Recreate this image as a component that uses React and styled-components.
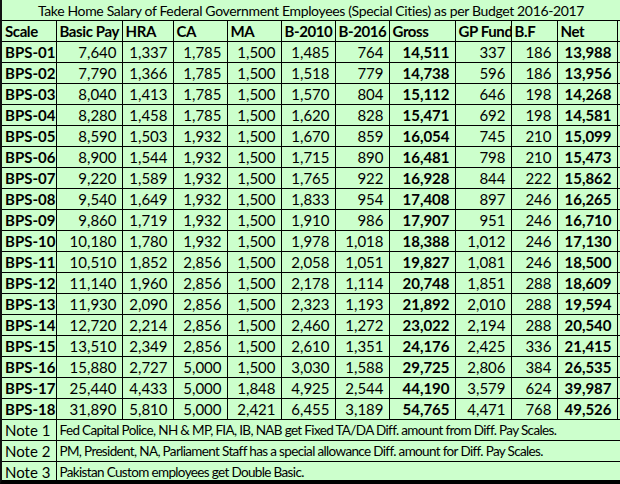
import React from "react";
import styled, { createGlobalStyle } from "styled-components";

const Global = createGlobalStyle`
  html, body { margin: 0; padding: 0; background: #ccffcc; }
  body { font-family: Lato, "Open Sans", sans-serif; color: #000; }
`;

const Sheet = styled.div`
  width: 620px;
  height: 484px;
  box-sizing: border-box;
  background: #ccffcc;
  border-left: 2px solid #111;
  border-bottom: 4px solid #000;
  overflow: hidden;
`;

const Table = styled.table`
  border-collapse: collapse;
  table-layout: fixed;
  width: 618px;
  font-size: 15px;
  line-height: 19px;
`;

const TitleCell = styled.td`
  height: 20px;
  padding: 0;
  text-align: center;
  white-space: nowrap;
  font-size: 14px;
  letter-spacing: -0.35px;
  border-bottom: 1px solid #000;
`;

const Cell = styled.td`
  height: 20px;
  padding: 0 5px 0 3px;
  border: 1px solid #000;
  border-top: none;
  white-space: nowrap;
  overflow: hidden;
  text-align: ${(p) => (p.$num ? "right" : "left")};
  font-weight: ${(p) => (p.$bold ? 700 : 400)};
  letter-spacing: ${(p) => (p.$head ? "-0.4px" : "0")};
  &:first-child { border-left: none; }
  &:last-child { border-right: none; }
`;

const Gutter = styled.td`
  padding: 0;
  border-bottom: 1px solid #000;
`;

const NoteText = styled(Cell)`
  font-size: 13.5px;
  letter-spacing: -0.65px;
`;

const widths = [54, 66, 51, 54, 54, 54, 54, 66, 56, 46, 60, 3];
const headers = ["Scale", "Basic Pay", "HRA", "CA", "MA", "B-2010", "B-2016", "Gross", "GP Fund", "B.F", "Net"];

const rows = [
  ["BPS-01", "7,640", "1,337", "1,785", "1,500", "1,485", "764", "14,511", "337", "186", "13,988"],
  ["BPS-02", "7,790", "1,366", "1,785", "1,500", "1,518", "779", "14,738", "596", "186", "13,956"],
  ["BPS-03", "8,040", "1,413", "1,785", "1,500", "1,570", "804", "15,112", "646", "198", "14,268"],
  ["BPS-04", "8,280", "1,458", "1,785", "1,500", "1,620", "828", "15,471", "692", "198", "14,581"],
  ["BPS-05", "8,590", "1,503", "1,932", "1,500", "1,670", "859", "16,054", "745", "210", "15,099"],
  ["BPS-06", "8,900", "1,544", "1,932", "1,500", "1,715", "890", "16,481", "798", "210", "15,473"],
  ["BPS-07", "9,220", "1,589", "1,932", "1,500", "1,765", "922", "16,928", "844", "222", "15,862"],
  ["BPS-08", "9,540", "1,649", "1,932", "1,500", "1,833", "954", "17,408", "897", "246", "16,265"],
  ["BPS-09", "9,860", "1,719", "1,932", "1,500", "1,910", "986", "17,907", "951", "246", "16,710"],
  ["BPS-10", "10,180", "1,780", "1,932", "1,500", "1,978", "1,018", "18,388", "1,012", "246", "17,130"],
  ["BPS-11", "10,510", "1,852", "2,856", "1,500", "2,058", "1,051", "19,827", "1,081", "246", "18,500"],
  ["BPS-12", "11,140", "1,960", "2,856", "1,500", "2,178", "1,114", "20,748", "1,851", "288", "18,609"],
  ["BPS-13", "11,930", "2,090", "2,856", "1,500", "2,323", "1,193", "21,892", "2,010", "288", "19,594"],
  ["BPS-14", "12,720", "2,214", "2,856", "1,500", "2,460", "1,272", "23,022", "2,194", "288", "20,540"],
  ["BPS-15", "13,510", "2,349", "2,856", "1,500", "2,610", "1,351", "24,176", "2,425", "336", "21,415"],
  ["BPS-16", "15,880", "2,727", "5,000", "1,500", "3,030", "1,588", "29,725", "2,806", "384", "26,535"],
  ["BPS-17", "25,440", "4,433", "5,000", "1,848", "4,925", "2,544", "44,190", "3,579", "624", "39,987"],
  ["BPS-18", "31,890", "5,810", "5,000", "2,421", "6,455", "3,189", "54,765", "4,471", "768", "49,526"],
];

const notes = [
  ["Note 1", "Fed Capital Police, NH & MP, FIA, IB, NAB get Fixed TA/DA Diff. amount from Diff. Pay Scales."],
  ["Note 2", "PM, President, NA, Parliament Staff has a special allowance Diff. amount for Diff. Pay Scales."],
  ["Note 3", "Pakistan Custom employees get Double Basic."],
];

const boldCols = new Set([0, 7, 10]);

export default function App() {
  return (
    <>
      <Global />
      <Sheet>
        <Table>
          <colgroup>
            {widths.map((w, i) => (
              <col key={i} style={{ width: w }} />
            ))}
          </colgroup>
          <tbody>
            <tr>
              <TitleCell colSpan={12}>
                Take Home Salary of Federal Government Employees (Special Cities) as per Budget 2016-2017
              </TitleCell>
            </tr>
            <tr>
              {headers.map((h) => (
                <Cell key={h} $bold $head>
                  {h}
                </Cell>
              ))}
              <Gutter />
            </tr>
            {rows.map((r) => (
              <tr key={r[0]}>
                {r.map((v, i) => (
                  <Cell key={i} $num={i > 0} $bold={boldCols.has(i)}>
                    {v}
                  </Cell>
                ))}
                <Gutter />
              </tr>
            ))}
            {notes.map(([n, t]) => (
              <tr key={n}>
                <Cell>{n}</Cell>
                <NoteText colSpan={11}>{t}</NoteText>
              </tr>
            ))}
          </tbody>
        </Table>
      </Sheet>
    </>
  );
}
